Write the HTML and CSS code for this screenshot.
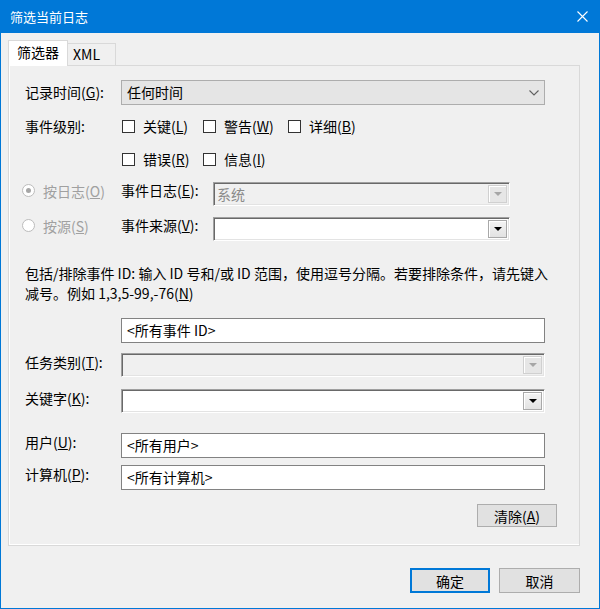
FILE: index.html
```html
<!DOCTYPE html>
<html lang="zh-CN">
<head>
<meta charset="utf-8">
<title>筛选当前日志</title>
<link rel="stylesheet" href="styles.css">
</head>
<body>
<div class="window">
  <div class="titlebar">
    <span class="title">筛选当前日志</span>
    <svg class="close" width="11" height="11" viewBox="0 0 11 11"><path d="M0.5 0.5 L10.5 10.5 M10.5 0.5 L0.5 10.5" stroke="#fff" stroke-width="1.1" fill="none"/></svg>
  </div>
  <div class="client">
    <div class="tabs">
      <div class="tab active">筛选器</div>
      <div class="tab xml">XML</div>
    </div>
    <div class="panel">
      <div class="row r-time">
        <span class="lbl lbl-time">记录时间(<u>G</u>):</span>
        <div class="combo-flat">
          <span>任何时间</span>
          <svg class="chev" width="10" height="6" viewBox="0 0 10 6"><polyline points="0.5,0.5 5,5 9.5,0.5" fill="none" stroke="#606060" stroke-width="1.1"/></svg>
        </div>
      </div>
      <div class="row r-lv1">
        <span class="lbl lbl-chk">事件级别:</span>
        <div class="checks">
          <span class="chk"><i class="box"></i>关键(<u>L</u>)</span>
          <span class="chk"><i class="box"></i>警告(<u>W</u>)</span>
          <span class="chk"><i class="box"></i>详细(<u>B</u>)</span>
        </div>
      </div>
      <div class="row r-lv2">
        <span class="lbl lbl-chk"></span>
        <div class="checks">
          <span class="chk"><i class="box"></i>错误(<u>R</u>)</span>
          <span class="chk"><i class="box"></i>信息(<u>I</u>)</span>
        </div>
      </div>
      <div class="row r-radio1">
        <span class="radio-item"><i class="radio on"></i>按日志(<u>O</u>)</span>
        <span class="lbl2">事件日志(<u>E</u>):</span>
        <div class="combo3d disabled short">
          <span class="val">系统</span>
          <span class="ddbtn"><i class="tri"></i></span>
        </div>
      </div>
      <div class="row r-radio2">
        <span class="radio-item"><i class="radio"></i>按源(<u>S</u>)</span>
        <span class="lbl2">事件来源(<u>V</u>):</span>
        <div class="combo3d short">
          <span class="val"></span>
          <span class="ddbtn"><i class="tri"></i></span>
        </div>
      </div>
      <div class="desc">
        <p class="desc-line">包括/排除事件 ID: 输入 ID 号和/或 ID 范围，使用逗号分隔。若要排除条件，请先键入</p>
        <p class="desc-line">减号。例如 1,3,5-99,-76(<u>N</u>)</p>
      </div>
      <div class="row r-ids">
        <span class="lbl"></span>
        <div class="input">&lt;所有事件 ID&gt;</div>
      </div>
      <div class="row r-task">
        <span class="lbl">任务类别(<u>T</u>):</span>
        <div class="combo3d disabled">
          <span class="val"></span>
          <span class="ddbtn"><i class="tri"></i></span>
        </div>
      </div>
      <div class="row r-key">
        <span class="lbl">关键字(<u>K</u>):</span>
        <div class="combo3d">
          <span class="val"></span>
          <span class="ddbtn"><i class="tri"></i></span>
        </div>
      </div>
      <div class="row r-user">
        <span class="lbl">用户(<u>U</u>):</span>
        <div class="input">&lt;所有用户&gt;</div>
      </div>
      <div class="row r-comp">
        <span class="lbl">计算机(<u>P</u>):</span>
        <div class="input">&lt;所有计算机&gt;</div>
      </div>
      <div class="row r-clear">
        <button class="btn btn-clear">清除(<u>A</u>)</button>
      </div>
    </div>
    <div class="footer">
      <button class="btn btn-ok">确定</button>
      <button class="btn btn-cancel">取消</button>
    </div>
  </div>
</div>
</body>
</html>
```
FILE: styles.css
```css
html, body {
  margin: 0;
  padding: 0;
  background: #f0f0f0;
}
body {
  font-family: "Noto Sans CJK SC", "Noto Sans", sans-serif;
  font-size: 14px;
  color: #000;
}
u {
  text-underline-offset: 1px;
}
.window {
  width: 600px;
  height: 609px;
  box-sizing: border-box;
  border: 1px solid #0078d7;
  border-top: 0;
  background: #f0f0f0;
  display: flex;
  flex-direction: column;
}
.titlebar {
  height: 33px;
  flex: none;
  background: #0078d7;
  color: #fff;
  display: flex;
  align-items: center;
  padding: 0 11px 0 9px;
  font-size: 13px;
}
.close {
  margin-left: auto;
}
.client {
  padding: 7px 19px 0 7px;
}
.tabs {
  display: flex;
  align-items: flex-end;
  height: 25px;
}
.tab {
  box-sizing: border-box;
  border: 1px solid #d9d9d9;
  border-bottom: 0;
  font-size: 14px;
}
.tab.active {
  width: 60px;
  height: 26px;
  margin-bottom: -1px;
  position: relative;
  z-index: 1;
  background: #fff;
  padding-left: 8px;
  line-height: 23px;
}
.tab.xml {
  width: 48px;
  height: 22px;
  border-left: 0;
  background: #f0f0f0;
  padding-left: 5px;
  line-height: 20px;
}
.panel {
  height: 481px;
  box-sizing: border-box;
  border: 1px solid #d9d9d9;
  box-shadow: inset 1px -1px 0 #fff;
  background: #f0f0f0;
  padding: 14px 22px 0 16px;
}
.row {
  display: flex;
  align-items: flex-start;
}
.lbl {
  width: 96px;
  flex: none;
  line-height: 18px;
  white-space: nowrap;
}
.lbl-time {
  padding-top: 3px;
}
.lbl-chk {
  line-height: 20px;
}
.combo-flat {
  width: 424px;
  height: 25px;
  box-sizing: border-box;
  border: 1px solid #adadad;
  background: #e5e5e5;
  padding: 0 5px 0 5px;
  line-height: 23px;
  display: flex;
  align-items: center;
}
.chev {
  margin-left: auto;
}
.r-lv1 {
  margin-top: 11px;
}
.r-lv2 {
  margin-top: 13px;
}
.checks {
  display: grid;
  grid-template-columns: 81px 85px auto;
  margin-left: 1px;
}
.chk {
  display: flex;
  align-items: center;
  height: 20px;
  white-space: nowrap;
}
.box {
  width: 13px;
  height: 13px;
  box-sizing: border-box;
  border: 1px solid #333;
  background: #fff;
  margin-right: 8px;
}
.r-radio1 {
  margin-top: 13px;
  margin-left: -3px;
}
.r-radio2 {
  margin-top: 11px;
  margin-left: -3px;
}
.radio-item {
  width: 99px;
  flex: none;
  display: flex;
  align-items: center;
  height: 17px;
  color: #a0a0a0;
  white-space: nowrap;
}
.radio {
  width: 13px;
  height: 13px;
  box-sizing: border-box;
  border: 1px solid #bcbcbc;
  border-radius: 50%;
  background: #fff;
  margin-right: 8px;
  display: flex;
  align-items: center;
  justify-content: center;
}
.radio.on::after {
  content: "";
  width: 5px;
  height: 5px;
  border-radius: 50%;
  background: #a6a6a6;
}
.lbl2 {
  width: 92px;
  flex: none;
  line-height: 17px;
  white-space: nowrap;
}
.combo3d {
  width: 424px;
  height: 24px;
  box-sizing: border-box;
  border: 1px solid;
  border-color: #a0a0a0 #fff #fff #a0a0a0;
  box-shadow: inset 1px 1px 0 #696969, inset -1px -1px 0 #e3e3e3;
  background: #fff;
  display: flex;
  align-items: center;
  padding: 0 2px 0 3px;
}
.combo3d.short {
  width: 297px;
}
.combo3d.disabled {
  background: #f0f0f0;
  color: #8a8a8a;
}
.val {
  line-height: 20px;
}
.ddbtn {
  margin-left: auto;
  width: 19px;
  height: 18px;
  box-sizing: border-box;
  border: 1px solid #a9a9a9;
  background: linear-gradient(#f4f4f4, #e2e2e2);
  box-shadow: inset 1px 1px 0 #fff;
  display: flex;
  align-items: center;
  justify-content: center;
}
.tri {
  width: 0;
  height: 0;
  border-left: 4px solid transparent;
  border-right: 4px solid transparent;
  border-top: 4px solid #000;
}
.disabled .ddbtn {
  border-color: #d0d0d0;
  background: #e6e6e6;
}
.disabled .tri {
  border-top-color: #a6a6a6;
}
.desc {
  margin-top: 22px;
  display: flex;
  flex-direction: column;
}
.desc-line {
  margin: 0;
  height: 20px;
  line-height: 20px;
  white-space: nowrap;
}
.input {
  width: 424px;
  height: 25px;
  box-sizing: border-box;
  border: 1px solid #828282;
  background: #fff;
  padding-left: 5px;
  line-height: 23px;
}
.r-ids {
  margin-top: 15px;
}
.r-task {
  margin-top: 10px;
}
.r-key {
  margin-top: 12px;
}
.r-user {
  margin-top: 20px;
}
.r-comp {
  margin-top: 7px;
}
.r-clear {
  margin-top: 14px;
  justify-content: flex-end;
}
.btn {
  box-sizing: border-box;
  border: 1px solid #adadad;
  background: #e1e1e1;
  font-family: inherit;
  font-size: 14px;
  color: #000;
  padding: 0;
  margin: 0;
}
.btn-clear {
  width: 80px;
  height: 23px;
  line-height: 20px;
}
.footer {
  margin-top: 22px;
  display: flex;
  justify-content: flex-end;
  gap: 9px;
}
.btn-ok {
  width: 80px;
  height: 25px;
  border: 2px solid #0078d7;
}
.btn-cancel {
  width: 81px;
  height: 25px;
}
```
